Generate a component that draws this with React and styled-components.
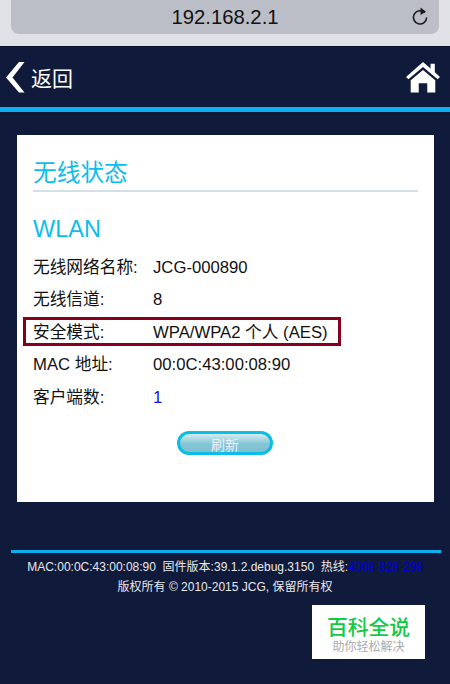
import React from 'react';
import styled, { createGlobalStyle } from 'styled-components';

const GlobalStyle = createGlobalStyle`
html, body {
  margin: 0;
  padding: 0;
  background: #101a3a;
  font-family: "Liberation Sans", "Noto Sans CJK SC", sans-serif;
}
`

const Page = styled.div`
width: 450px;
height: 684px;
overflow: hidden;
background: #101a3a;
display: flex;
flex-direction: column;
`

const BrowserBar = styled.div`
height: 46px;
flex: none;
background: #e0e1e5;
border-bottom: 1px solid #0a1028;
padding: 0 11px;
box-sizing: content-box;
`

const AddressField = styled.div`
height: 34px;
border-radius: 0 0 8px 8px;
background: #bcbec7;
display: flex;
align-items: center;
justify-content: center;
position: relative;
font-size: 20.3px;
color: #111;
`

const Reload = styled.svg`
position: absolute;
right: 9px;
top: 5px;
`

const Header = styled.header`
height: 60px;
flex: none;
display: flex;
align-items: center;
justify-content: space-between;
padding: 0 10px 0 6px;
border-bottom: 5px solid #0ab0ee;
`

const Back = styled.div`
display: flex;
align-items: center;
gap: 6px;
color: #fff;
font-size: 21px;
`

const Main = styled.main`
margin: 23px 16px 0 17px;
height: 367px;
flex: none;
background: #fff;
padding: 21px 16px 0 16px;
box-sizing: border-box;
position: relative;
`

const CardTitle = styled.h2`
margin: 0;
height: 34px;
line-height: 35px;
font-size: 23.7px;
font-weight: 400;
color: #0dbdea;
border-bottom: 2px solid #d3e0ea;
`

const SectionTitle = styled.h3`
margin: 19px 0 0;
height: 36px;
line-height: 36px;
font-size: 23.5px;
font-weight: 400;
color: #0dbdea;
`

const Rows = styled.div`
margin-top: 5px;
`

const Row = styled.div`
height: 32.4px;
line-height: 32.4px;
display: flex;
font-size: 16.7px;
color: #111;
`

const Label = styled.span`
width: 120px;
flex: none;
`

const Value = styled.span`
color: ${props => props.$link ? '#1010e0' : '#111'};
`

const Highlight = styled.div`
position: absolute;
left: 6px;
top: 182px;
width: 318px;
height: 29px;
box-sizing: border-box;
border: 3px solid #86001e;
`

const RefreshButton = styled.button`
display: block;
margin: 17px 0 0 144px;
width: 96px;
height: 24px;
padding: 0 0 3px;
border: 3px solid #0cbce6;
border-radius: 12px;
background: linear-gradient(#d4ecf1, #84c6d5 55%, #7fc0d0);
color: #eef;
font-family: inherit;
font-size: 14px;
box-sizing: border-box;
`

const FooterLine = styled.div`
margin: 48px 9px 0 11px;
height: 3px;
flex: none;
background: #0ab0ee;
`

const FooterText = styled.footer`
margin-top: 4px;
text-align: center;
font-size: 12px;
line-height: 20px;
color: #e8e8ee;
white-space: pre;
`

const Hotline = styled.span`
color: #0000d8;
`

const WatermarkRow = styled.div`
display: flex;
justify-content: flex-end;
padding-right: 25px;
margin-top: 8px;
`

const Watermark = styled.div`
width: 113px;
height: 54px;
background: #fff;
display: flex;
flex-direction: column;
align-items: center;
padding-top: 11px;
box-sizing: border-box;
`

const WatermarkName = styled.div`
font-size: 20.8px;
line-height: 24px;
font-weight: 500;
color: #0fcb45;
`

const WatermarkSub = styled.div`
margin-top: -1px;
font-size: 12px;
line-height: 16px;
color: #aaa;
`

const rows = [
  { label: '无线网络名称:', value: 'JCG-000890' },
  { label: '无线信道:', value: '8' },
  { label: '安全模式:', value: 'WPA/WPA2 个人 (AES)' },
  { label: 'MAC 地址:', value: '00:0C:43:00:08:90' },
  { label: '客户端数:', value: '1', link: true },
]

const App = () => {
  return (
    <>
      <GlobalStyle />
      <Page>
        <BrowserBar>
          <AddressField>
            192.168.2.1
            <Reload width="20" height="22" viewBox="0 0 20 22" fill="none">
              <path d="M14.6 7.6A6.6 6.6 0 1 0 16.6 12.4" stroke="#1a1a1a" strokeWidth="1.6" />
              <path d="M10.5 2.5 L16 6.8 L10.5 10 Z" fill="#1a1a1a" />
            </Reload>
          </AddressField>
        </BrowserBar>
        <Header>
          <Back>
            <svg width="19" height="31" viewBox="0 0 19 31">
              <path d="M13 0 L18.5 0 L6.5 15.5 L18.5 30.5 L13 30.5 L0 15.5 Z" fill="#fff" />
            </svg>
            返回
          </Back>
          <svg width="34" height="34" viewBox="0 0 36 34">
            <path d="M18 1 L26 8 V3 H30.5 V12 L36 17 L33.5 19.5 L18 6.5 L2.5 19.5 L0 17 Z" fill="#fff" />
            <path d="M18 9.5 L31 20.5 V33.5 H22.5 V23.5 H13.5 V33.5 H5 V20.5 Z" fill="#fff" />
          </svg>
        </Header>
        <Main>
          <CardTitle>无线状态</CardTitle>
          <SectionTitle>WLAN</SectionTitle>
          <Rows>
            {rows.map(row => (
              <Row key={row.label}>
                <Label>{row.label}</Label>
                <Value $link={row.link}>{row.value}</Value>
              </Row>
            ))}
          </Rows>
          <Highlight />
          <RefreshButton>刷新</RefreshButton>
        </Main>
        <FooterLine />
        <FooterText>
          <div>MAC:00:0C:43:00:08:90  固件版本:39.1.2.debug.3150  热线:<Hotline>4008-828-298</Hotline></div>
          <div>版权所有 © 2010-2015 JCG, 保留所有权</div>
        </FooterText>
        <WatermarkRow>
          <Watermark>
            <WatermarkName>百科全说</WatermarkName>
            <WatermarkSub>助你轻松解决</WatermarkSub>
          </Watermark>
        </WatermarkRow>
      </Page>
    </>
  )
}

export default App;
